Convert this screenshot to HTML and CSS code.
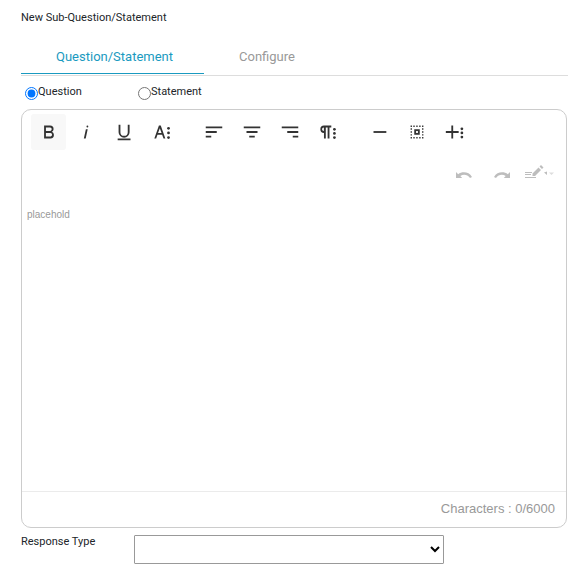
FILE: index.html
```html
<!DOCTYPE html>
<html lang="en">

<head>
  <meta charset="utf-8">
  <title>New Sub-Question/Statement</title>
  <link rel="stylesheet" href="styles.css">
</head>

<body>
  <form class="sub-question">
    <h1 class="title">New Sub-Question/Statement</h1>

    <nav class="tabs">
      <a class="tab active" href="#question">Question/Statement</a>
      <a class="tab" href="#configure">Configure</a>
    </nav>

    <div class="kinds">
      <label class="kind"><input type="radio" name="kind" checked><span>Question</span></label>
      <label class="kind"><input type="radio" name="kind"><span>Statement</span></label>
    </div>

    <div class="editor">
      <div class="toolbar">
        <div class="group">
          <button type="button" class="tool active" aria-label="Bold">
            <svg viewBox="0 0 24 24"><path d="M15.25,11.8h0A3.68,3.68,0,0,0,17,9a3.93,3.93,0,0,0-3.86-4H6.65V19h7a3.74,3.74,0,0,0,3.7-3.78V15.1A3.64,3.64,0,0,0,15.25,11.8ZM8.65,7h4.2a2.09,2.09,0,0,1,2,1.3,2.09,2.09,0,0,1-1.37,2.61,2.23,2.23,0,0,1-.63.09H8.65Zm4.6,10H8.65V13h4.6a2.09,2.09,0,0,1,2,1.3,2.09,2.09,0,0,1-1.37,2.61A2.23,2.23,0,0,1,13.25,17Z"/></svg>
          </button>
          <button type="button" class="tool" aria-label="Italic">
            <svg viewBox="0 0 24 24"><path d="M10.76,9h2l-2.2,10h-2Zm1.68-4a1,1,0,1,0,1,1,1,1,0,0,0-1-1Z"/></svg>
          </button>
          <button type="button" class="tool" aria-label="Underline">
            <svg viewBox="0 0 24 24"><path d="M18,19v2H4V19ZM15,4v8.200a4,4,0,0,1-8,0V4H5v8.200a6,6,0,0,0,12,0V4Z"/></svg>
          </button>
          <button type="button" class="tool" aria-label="More text">
            <svg viewBox="0 0 24 24"><path d="M12.550,19h2l-5-14h-2l-5,14h2l1.400-4h5.100ZM6.600,13l1.950-5.200L10.400,13Z"/><circle cx="18" cy="8" r="1.500"/><circle cx="18" cy="13" r="1.500"/><circle cx="18" cy="18" r="1.500"/></svg>
          </button>
        </div>
        <div class="group">
          <button type="button" class="tool" aria-label="Align left">
            <svg viewBox="0 0 24 24"><path d="M3,18h6v-2H3ZM3,6v2h18V6Zm0,7h12v-2H3Z"/></svg>
          </button>
          <button type="button" class="tool" aria-label="Align center">
            <svg viewBox="0 0 24 24"><path d="M9,18h6v-2H9ZM3,6v2h18V6Zm3,7h12v-2H6Z"/></svg>
          </button>
          <button type="button" class="tool" aria-label="Align right">
            <svg viewBox="0 0 24 24"><path d="M15,18h6v-2h-6ZM3,6v2h18V6Zm6,7h12v-2H9Z"/></svg>
          </button>
          <button type="button" class="tool" aria-label="More paragraph">
            <svg viewBox="0 0 24 24"><path d="M7.700,5a4,4,0,0,0-.1,8v6h2V7h2v12h2V7h2V5ZM5.500,9a2,2,0,0,1,2-2v4A2,2,0,0,1,5.500,9Z"/><circle cx="19" cy="9" r="1.500"/><circle cx="19" cy="13.500" r="1.500"/><circle cx="19" cy="18" r="1.500"/></svg>
          </button>
        </div>
        <div class="group">
          <button type="button" class="tool" aria-label="Horizontal line">
            <svg viewBox="0 0 24 24"><path d="M6,11h14v2H6Z"/></svg>
          </button>
          <button type="button" class="tool" aria-label="Select all">
            <svg viewBox="0 0 24 24"><path d="M5,5h1.500v1.500H5ZM8,5h1.500v1.500H8ZM11.200,5h1.500v1.500h-1.500ZM14.400,5h1.500v1.500h-1.500ZM17.500,5h1.500v1.500h-1.500ZM5,17.500h1.500V19H5ZM8,17.500h1.500V19H8ZM11.200,17.500h1.500V19h-1.500ZM14.400,17.500h1.500V19h-1.500ZM17.500,17.500h1.500V19h-1.500ZM5,8h1.500v1.500H5ZM5,11.200h1.500v1.500H5ZM5,14.400h1.500v1.500H5ZM17.500,8h1.500v1.500h-1.500ZM17.500,11.200h1.500v1.500h-1.500ZM17.500,14.400h1.500v1.500h-1.500Z"/><path fill-rule="evenodd" d="M9,9h6v6H9ZM11,11v2h2v-2Z"/></svg>
          </button>
          <button type="button" class="tool" aria-label="More rich">
            <svg viewBox="0 0 24 24"><path d="M16,13h-6v6H8v-6H2v-2h6V5h2v6h6Z"/><circle cx="19.500" cy="8.500" r="1.500"/><circle cx="19.500" cy="13" r="1.500"/><circle cx="19.500" cy="17.500" r="1.500"/></svg>
          </button>
        </div>
      </div>

      <div class="history">
        <button type="button" class="step" aria-label="Undo" disabled>
          <svg width="18" height="16" viewBox="0 0 18 16"><path d="M1,7l2.200,2.200C7,6.300,14,6.500,17,12l-2,1C12.500,9.500,8.500,9,5.300,11L7.200,13H1Z"/></svg>
        </button>
        <button type="button" class="step" aria-label="Redo" disabled>
          <svg width="18" height="16" viewBox="0 0 18 16"><path d="M17,7l-2.200,2.200C11,6.300,4,6.500,1,12l2,1C5.500,9.500,9.500,9,12.700,11L10.800,13H17Z"/></svg>
        </button>
        <button type="button" class="step" aria-label="Track changes" disabled>
          <svg width="30" height="16" viewBox="0 0 30 16"><path d="M1,7h7v1H1ZM1,9h6v1H1ZM1,12h11v1H1ZM8.500,8.500l6-6L17,5l-6,6H8.500ZM15.500,1.500L17,0L19.500,2.500L18,4ZM20,7.500L23,6.500V10Z"/><path class="faint" d="M25,7.500h5l-2.500,2.500Z"/></svg>
        </button>
      </div>

      <textarea class="text" placeholder="placehold" aria-label="Question text"></textarea>
      <div class="counter">Characters : 0/6000</div>
    </div>

    <div class="response">
      <label for="response-type">Response Type</label>
      <select id="response-type">
        <option></option>
      </select>
    </div>
  </form>
</body>

</html>
```
FILE: styles.css
```css
* {
  box-sizing: border-box;
}

body {
  margin: 0;
  background: #fff;
  color: #212529;
  font: 11px/16px Roboto, "Liberation Sans", sans-serif;
}

.sub-question {
  padding: 10px 21px 20px;
}

.title {
  margin: 0;
  font-size: 11px;
  font-weight: 400;
}

/* tabs */
.tabs {
  display: flex;
  margin: 14px -1px 0 0;
  padding-bottom: 1px;
  border-bottom: 1px solid #ddd;
}

.tab {
  padding: 9px 31px 8px 35px;
  border-bottom: 1px solid transparent;
  color: #999;
  font-size: 13px;
  text-decoration: none;
}

.tab.active {
  border-color: #1a9ac0;
  color: #1a9ac0;
}

/* question or statement */
.kinds {
  display: flex;
  padding: 8px 3px 0;
}

.kind {
  display: flex;
  width: 113px;
  height: 25px;
}

.kind input {
  width: 13px;
  height: 13px;
  margin: 3px 0 0 1px;
}

/* editor */
.editor {
  border: 1px solid #ccc;
  border-radius: 10px;
}

.toolbar {
  display: flex;
  flex-wrap: wrap;
  gap: 16px;
  padding: 4px 9px 0;
}

.group {
  display: flex;
  gap: 3px;
}

.tool {
  display: flex;
  align-items: center;
  justify-content: center;
  width: 35px;
  height: 36px;
  padding: 0;
  border: 0;
  border-radius: 3px;
  background: none;
}

.tool.active {
  background: #f8f8f8;
}

.tool svg {
  width: 22px;
  height: 22px;
  fill: #333;
}

.history {
  display: flex;
  justify-content: flex-end;
  gap: 20px;
  padding: 15px 12px 0;
}

.step {
  display: flex;
  padding: 0;
  border: 0;
  background: none;
}

.step + .step + .step {
  margin-left: -7px;
}

.step svg {
  fill: #bdbdbd;
}

.step .faint {
  fill: #ddd;
}

.text {
  display: block;
  width: 100%;
  min-height: 310px;
  padding: 26px 5px 0;
  border: 0;
  background: none;
  font: 10px/16px "Liberation Sans", Arial, sans-serif;
  resize: none;
  outline: none;
}

.text::placeholder {
  color: #999;
}

.counter {
  padding: 9px 11px 10px;
  border-top: 1px solid #ebebeb;
  color: #999;
  font: 13px/16px "Liberation Sans", Arial, sans-serif;
  text-align: right;
}

/* response type */
.response {
  display: flex;
  padding-top: 6px;
}

.response label {
  width: 113px;
}

.response select {
  flex: 0 1 310px;
  height: 29px;
  margin-top: 1px;
  border: 1px solid #999;
  border-radius: 1px;
  background: #fff;
}
```
